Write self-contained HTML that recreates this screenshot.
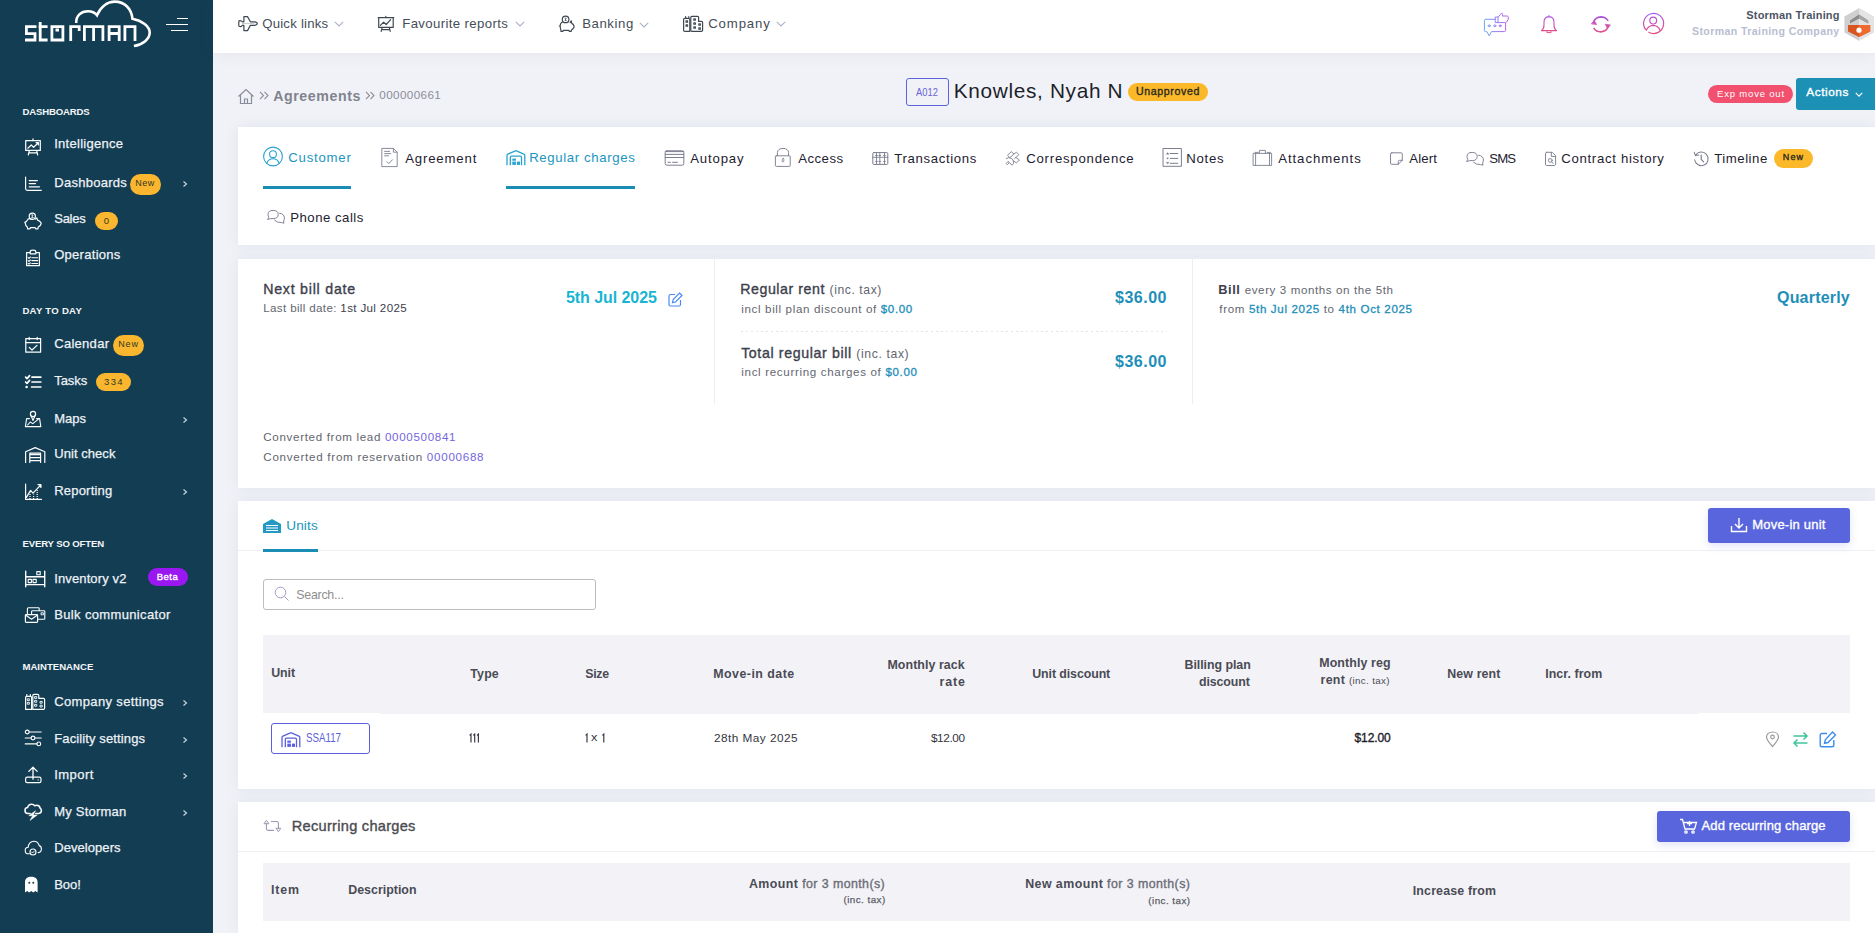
<!DOCTYPE html><html><head><meta charset="utf-8"><style>
*{box-sizing:border-box;margin:0;padding:0}
html,body{width:1875px;height:933px;overflow:hidden;background:#f1f2f7;font-family:'Liberation Sans', sans-serif}
.t{position:absolute;white-space:nowrap;line-height:1}
</style></head><body>
<div style="position:absolute;left:0px;top:0px;width:213px;height:933px;background:#133d53"></div>
<svg style="position:absolute;left:20px;top:0px;" width="135" height="50" viewBox="0 0 135 50" fill="none">
<g stroke="#fff" stroke-width="2.8" stroke-linecap="butt" stroke-linejoin="miter" fill="none" transform="translate(-20,0)">
<path d="M36.5,26.6 H26.4 V33.6 H35 V40 H25"/>
<path d="M40.2,22 V40 H47.6 M38.6,26.6 H47.6"/>
<path d="M51.9,26.6 H62.9 V40 H51.9 Z M55.5,30 H59"/>
<path d="M70.7,41 V26.6 H79.2 V31"/>
<path d="M84.4,41 V26.6 H102.9 V41 M93.6,26.6 V41"/>
<path d="M109.1,41 V26.6 H119.2 V41 M109.1,33.5 H119.2"/>
<path d="M124.9,41 V26.6 H135 V41"/>
<path stroke-width="2.6" d="M76.2,23 C76,15.5 81,11.3 88,11.3 C92,11.3 95,12.8 97,15.3 C101,6 108,1.6 114.7,1.6 C125,1.6 131.5,9 132.4,18.7 C142,20.5 149.7,26.5 149.7,32.6 C149.7,39 143,44.5 133.9,46"/>
</g></svg>
<div style="position:absolute;left:177px;top:18px;width:11px;height:1.3000000000000007px;background:#fff"></div>
<div style="position:absolute;left:166px;top:24px;width:22px;height:1.3000000000000007px;background:#fff"></div>
<div style="position:absolute;left:171px;top:30px;width:17px;height:1.3000000000000007px;background:#fff"></div>
<div id="t0" class="t" style="left:21.92px;top:107.04px;font-size:9.60px;font-weight:700;color:#f4f6f8;letter-spacing:-0.167px;margin-left:0.50px">DASHBOARDS</div>
<div id="t1" class="t" style="left:21.92px;top:306.34px;font-size:9.60px;font-weight:700;color:#f4f6f8;letter-spacing:0.261px;margin-left:0.50px">DAY TO DAY</div>
<div id="t2" class="t" style="left:21.92px;top:538.84px;font-size:9.60px;font-weight:700;color:#f4f6f8;letter-spacing:-0.154px;margin-left:0.50px">EVERY SO OFTEN</div>
<div id="t3" class="t" style="left:21.92px;top:662.24px;font-size:9.60px;font-weight:700;color:#f4f6f8;letter-spacing:0.000px;margin-left:0.50px">MAINTENANCE</div>
<div id="t4" class="t" style="left:53.72px;top:136.95px;font-size:13.00px;font-weight:400;color:#eef2f6;letter-spacing:0.273px;margin-left:0.50px;-webkit-text-stroke:0.25px #eef2f6">Intelligence</div>
<div id="t5" class="t" style="left:53.72px;top:175.75px;font-size:13.00px;font-weight:400;color:#eef2f6;letter-spacing:0.278px;margin-left:0.50px;-webkit-text-stroke:0.25px #eef2f6">Dashboards</div>
<svg style="position:absolute;left:181px;top:179.8px;" width="8" height="8" viewBox="0 0 8 8" fill="none"><path d="M2.5,1.5 L5.5,4 L2.5,6.5" stroke="#c9d3db" stroke-width="1.2"/></svg>
<div style="position:absolute;left:130px;top:174.0px;width:31px;height:21.0px;background:#fbb630;border-radius:10.5px"></div>
<div id="t6" class="t" style="left:145.50px;transform:translateX(-50%);top:179.01px;font-size:9.00px;font-weight:400;color:#2f3a22;letter-spacing:0.500px;margin-left:-0.50px">New</div>
<div id="t7" class="t" style="left:53.72px;top:212.45px;font-size:13.00px;font-weight:400;color:#eef2f6;letter-spacing:-0.250px;margin-left:0.50px;-webkit-text-stroke:0.25px #eef2f6">Sales</div>
<div style="position:absolute;left:95px;top:211.9px;width:23px;height:18.0px;background:#fbb630;border-radius:9.0px"></div>
<div id="t8" class="t" style="left:106.50px;transform:translateX(-50%);top:215.77px;font-size:9.50px;font-weight:400;color:#2f3a22;">0</div>
<div id="t9" class="t" style="left:53.72px;top:247.95px;font-size:13.00px;font-weight:400;color:#eef2f6;letter-spacing:0.278px;margin-left:0.50px;-webkit-text-stroke:0.25px #eef2f6">Operations</div>
<div id="t10" class="t" style="left:53.72px;top:337.35px;font-size:13.00px;font-weight:400;color:#eef2f6;letter-spacing:0.286px;margin-left:0.50px;-webkit-text-stroke:0.25px #eef2f6">Calendar</div>
<div style="position:absolute;left:113.2px;top:334.95px;width:30.89999999999999px;height:21.0px;background:#fbb630;border-radius:10.5px"></div>
<div id="t11" class="t" style="left:128.65px;transform:translateX(-50%);top:340.32px;font-size:9.00px;font-weight:400;color:#2f3a22;letter-spacing:0.900px;margin-left:-0.15px">New</div>
<div id="t12" class="t" style="left:53.72px;top:374.45px;font-size:13.00px;font-weight:400;color:#eef2f6;letter-spacing:-0.075px;margin-left:0.50px;-webkit-text-stroke:0.25px #eef2f6">Tasks</div>
<div style="position:absolute;left:95.9px;top:373.0px;width:35.099999999999994px;height:18.0px;background:#fbb630;border-radius:9.0px"></div>
<div id="t13" class="t" style="left:113.45px;transform:translateX(-50%);top:376.78px;font-size:9.50px;font-weight:400;color:#2f3a22;letter-spacing:1.300px;margin-left:0.55px">334</div>
<div id="t14" class="t" style="left:53.72px;top:411.55px;font-size:13.00px;font-weight:400;color:#eef2f6;letter-spacing:-0.000px;margin-left:0.50px;-webkit-text-stroke:0.25px #eef2f6">Maps</div>
<svg style="position:absolute;left:181px;top:415.6px;" width="8" height="8" viewBox="0 0 8 8" fill="none"><path d="M2.5,1.5 L5.5,4 L2.5,6.5" stroke="#c9d3db" stroke-width="1.2"/></svg>
<div id="t15" class="t" style="left:53.72px;top:446.95px;font-size:13.00px;font-weight:400;color:#eef2f6;letter-spacing:0.056px;margin-left:0.50px;-webkit-text-stroke:0.25px #eef2f6">Unit check</div>
<div id="t16" class="t" style="left:53.72px;top:483.95px;font-size:13.00px;font-weight:400;color:#eef2f6;letter-spacing:0.203px;margin-left:0.50px;-webkit-text-stroke:0.25px #eef2f6">Reporting</div>
<svg style="position:absolute;left:181px;top:488px;" width="8" height="8" viewBox="0 0 8 8" fill="none"><path d="M2.5,1.5 L5.5,4 L2.5,6.5" stroke="#c9d3db" stroke-width="1.2"/></svg>
<div id="t17" class="t" style="left:53.72px;top:571.95px;font-size:13.00px;font-weight:400;color:#eef2f6;letter-spacing:0.123px;margin-left:0.50px;-webkit-text-stroke:0.25px #eef2f6">Inventory v2</div>
<div style="position:absolute;left:148px;top:568.0px;width:40px;height:18.0px;background:#9a17f2;border-radius:9.0px"></div>
<div id="t18" class="t" style="left:168.00px;transform:translateX(-50%);top:571.77px;font-size:9.50px;font-weight:500;color:#ffffff;letter-spacing:0.530px;margin-left:-0.50px;-webkit-text-stroke:0.35px #ffffff">Beta</div>
<div id="t19" class="t" style="left:53.72px;top:607.55px;font-size:13.00px;font-weight:400;color:#eef2f6;letter-spacing:0.355px;margin-left:0.50px;-webkit-text-stroke:0.25px #eef2f6">Bulk communicator</div>
<div id="t20" class="t" style="left:53.72px;top:694.95px;font-size:13.00px;font-weight:400;color:#eef2f6;letter-spacing:0.355px;margin-left:0.50px;-webkit-text-stroke:0.25px #eef2f6">Company settings</div>
<svg style="position:absolute;left:181px;top:699px;" width="8" height="8" viewBox="0 0 8 8" fill="none"><path d="M2.5,1.5 L5.5,4 L2.5,6.5" stroke="#c9d3db" stroke-width="1.2"/></svg>
<div id="t21" class="t" style="left:53.72px;top:731.85px;font-size:13.00px;font-weight:400;color:#eef2f6;letter-spacing:0.120px;margin-left:0.50px;-webkit-text-stroke:0.25px #eef2f6">Facility settings</div>
<svg style="position:absolute;left:181px;top:735.9px;" width="8" height="8" viewBox="0 0 8 8" fill="none"><path d="M2.5,1.5 L5.5,4 L2.5,6.5" stroke="#c9d3db" stroke-width="1.2"/></svg>
<div id="t22" class="t" style="left:53.72px;top:767.55px;font-size:13.00px;font-weight:400;color:#eef2f6;letter-spacing:0.460px;margin-left:0.50px;-webkit-text-stroke:0.25px #eef2f6">Import</div>
<svg style="position:absolute;left:181px;top:771.6px;" width="8" height="8" viewBox="0 0 8 8" fill="none"><path d="M2.5,1.5 L5.5,4 L2.5,6.5" stroke="#c9d3db" stroke-width="1.2"/></svg>
<div id="t23" class="t" style="left:53.72px;top:804.65px;font-size:13.00px;font-weight:400;color:#eef2f6;letter-spacing:0.209px;margin-left:0.50px;-webkit-text-stroke:0.25px #eef2f6">My Storman</div>
<svg style="position:absolute;left:181px;top:808.7px;" width="8" height="8" viewBox="0 0 8 8" fill="none"><path d="M2.5,1.5 L5.5,4 L2.5,6.5" stroke="#c9d3db" stroke-width="1.2"/></svg>
<div id="t24" class="t" style="left:53.72px;top:841.45px;font-size:13.00px;font-weight:400;color:#eef2f6;letter-spacing:0.061px;margin-left:0.50px;-webkit-text-stroke:0.25px #eef2f6">Developers</div>
<div id="t25" class="t" style="left:53.72px;top:877.55px;font-size:13.00px;font-weight:400;color:#eef2f6;letter-spacing:-0.036px;margin-left:0.50px;-webkit-text-stroke:0.25px #eef2f6">Boo!</div>
<svg style="position:absolute;left:23px;top:137px" width="21" height="20" viewBox="23 137 21 20" fill="none" stroke="#fff" stroke-width="1.2" stroke-linecap="round" stroke-linejoin="round"><rect x="25.7" y="140.6" width="14.6" height="9.8"/><path d="M33,138.8 V140.6 M27.8,148.2 L31.3,145 L33.6,147.3 L38.3,142.7 M36,142.6 H38.4 V145 M29.2,151 L28.3,155 M36.8,151 L37.7,155 M28.8,152.9 H37.2"/></svg>
<svg style="position:absolute;left:23px;top:175px" width="21" height="18" viewBox="23 175 21 18" fill="none" stroke="#fff" stroke-width="1.2" stroke-linecap="round" stroke-linejoin="round"><path d="M25.6,177 V188.5 Q25.6,190.3 27.4,190.3 H41.3 M29.2,180.6 H37.4 M29.2,183.6 H35.5 M29.2,186.8 H39.5"/></svg>
<svg style="position:absolute;left:23px;top:211px" width="21" height="20" viewBox="23 211 21 20" fill="none" stroke="#fff" stroke-width="1.2" stroke-linecap="round" stroke-linejoin="round"><circle cx="32.3" cy="216.3" r="3.1"/><path d="M31.6,215 H33 L31.7,217.6 H33.2" stroke-width="0.9"/><path d="M27,220.5 C28,218.8 30,218.6 31,219 M35.4,219 L36.8,218 L37.6,220.2 C39,220.6 40.5,221.7 41.2,223 C41,225 39.5,226.5 38.2,227 L38,228.8 H35.6 L35.2,227.6 H30.5 L30,228.8 H27.6 L27.3,226.9 C26,226 25.4,224.8 25.4,223.4 L24.8,222.3 L26.3,221.6 C26.8,221 27,220.7 27,220.5"/></svg>
<svg style="position:absolute;left:23px;top:248px" width="21" height="20" viewBox="23 248 21 20" fill="none" stroke="#fff" stroke-width="1.2" stroke-linecap="round" stroke-linejoin="round"><path d="M30.2,252.6 H26.6 V265.6 H39.4 V252.6 H35.8 M30.2,253.8 V252 C30.2,250.8 31.4,250.2 33,250.2 C34.6,250.2 35.8,250.8 35.8,252 V253.8 Z"/><path d="M28.2,257.6 L29,258.4 L30.4,257 M28.2,260.6 L29,261.4 L30.4,260 M28.2,263.4 L29,264.2 L30.4,262.8 M31.8,257.7 H37.6 M31.8,260.6 H37.6 M31.8,263.5 H37.6" stroke-width="1.1"/></svg>
<svg style="position:absolute;left:23px;top:335px" width="21" height="20" viewBox="23 335 21 20" fill="none" stroke="#fff" stroke-width="1.2" stroke-linecap="round" stroke-linejoin="round"><rect x="25.8" y="338.6" width="14.8" height="13.6"/><path d="M25.8,342.6 H40.6 M29.2,337.4 V339.6 M37.2,337.4 V339.6 M29.2,347.4 L32,350 L37,345.4"/></svg>
<svg style="position:absolute;left:23px;top:373px" width="21" height="18" viewBox="23 373 21 18" fill="none" stroke="#fff" stroke-width="1.2" stroke-linecap="round" stroke-linejoin="round"><path d="M25.6,377.2 L27,378.6 L29.6,375.6 M25.6,382 L27,383.4 L29.6,380.4 M32,377.2 H40.8 M32,382 H40.8 M31.6,387 H40.8" stroke-width="1.7"/><circle cx="26.6" cy="387" r="1.3" fill="#fff" stroke="none"/></svg>
<svg style="position:absolute;left:23px;top:409px" width="21" height="20" viewBox="23 409 21 20" fill="none" stroke="#fff" stroke-width="1.2" stroke-linecap="round" stroke-linejoin="round"><circle cx="33" cy="414" r="2.6"/><path d="M31.2,416 L33,420.5 L34.8,416 M29.4,418.6 H26.6 L25.4,426.6 H40.8 L39.6,418.6 H36.6 M27.6,425 L30.2,422 L32.8,423.6 L38.2,419.4" stroke-width="1.1"/></svg>
<svg style="position:absolute;left:23px;top:445px" width="24" height="20" viewBox="23 445 24 20" fill="none" stroke="#fff" stroke-width="1.2" stroke-linecap="round" stroke-linejoin="round"><path d="M25.6,462.4 V451.8 L35.2,447.6 L44.8,451.8 V462.4 M29.8,462.4 V453.2 H40.6 V462.4 M29.8,454.6 H40.6 M29.8,457.6 H40.6 M29.8,460.6 H40.6"/></svg>
<svg style="position:absolute;left:23px;top:482px" width="21" height="20" viewBox="23 482 21 20" fill="none" stroke="#fff" stroke-width="1.2" stroke-linecap="round" stroke-linejoin="round"><path d="M25.6,484 V499.4 H41.4 M26.4,497.4 L30.6,490.4 L33,493.2 L40.8,484.8 M38,484.6 H40.9 V487.4"/><path d="M30,499 V492.6 M33.6,499 V494.6 M37.2,499 V489.8" stroke-dasharray="1 1" stroke-linecap="butt"/></svg>
<svg style="position:absolute;left:23px;top:569px" width="24" height="20" viewBox="23 569 24 20" fill="none" stroke="#fff" stroke-width="1.2" stroke-linecap="round" stroke-linejoin="round"><path d="M25.7,571.2 V586.8 M44.7,571.2 V586.8 M25.7,576.8 H44.7 M25.7,584.6 H44.7" stroke-width="1.4"/><rect x="36.8" y="571.6" width="3.4" height="3.2" stroke-width="1.1"/><rect x="28.2" y="579.4" width="3.2" height="3.2" stroke-width="1.1"/><rect x="33" y="579.4" width="3.2" height="3.2" stroke-width="1.1"/></svg>
<svg style="position:absolute;left:23px;top:605px" width="24" height="20" viewBox="23 605 24 20" fill="none" stroke="#fff" stroke-width="1.2" stroke-linecap="round" stroke-linejoin="round"><path d="M27.4,613.8 V608.8 Q27.4,607.8 28.4,607.8 H38.4 Q39.2,607.8 39.2,608.6 V610.4" stroke-width="1.1"/><path d="M38,619.2 H44 Q44.8,619.2 44.8,618.4 V611.6 Q44.8,610.8 44,610.8 H32.4 Q31.6,610.8 31.6,611.6 V614" stroke-width="1.1"/><rect x="41.4" y="612.8" width="2" height="2" stroke-width="0.9"/><rect x="25.4" y="614.6" width="12.2" height="7.8" rx="0.8" stroke-width="1.2"/><path d="M25.8,615.2 L31.5,619.2 L37.2,615.2" stroke-width="1.1"/></svg>
<svg style="position:absolute;left:23px;top:692px" width="24" height="20" viewBox="23 692 24 20" fill="none" stroke="#fff" stroke-width="1.2" stroke-linecap="round" stroke-linejoin="round"><path d="M25.6,709.4 V697.6 Q25.6,696.4 26.8,696.4 H30.4 Q31.6,696.4 31.6,697.6 V709.4 Z M26.8,696.4 V694.6 M30.4,696.4 V694.6" stroke-width="1.2"/><path d="M32.8,709.4 V695.6 Q32.8,694.4 34,694.4 H37.6 Q38.8,694.4 38.8,695.6 V698.4 H43.4 Q44.6,698.4 44.6,699.6 V708.2 Q44.6,709.4 43.4,709.4 Z" stroke-width="1.2"/><rect x="27.6" y="698.8" width="1.8" height="1.8" stroke-width="0.9"/><rect x="27.6" y="702.4" width="1.8" height="1.8" stroke-width="0.9"/><rect x="35" y="696.6" width="1.8" height="1.8" stroke-width="0.9"/><rect x="35" y="700.4" width="1.8" height="1.8" stroke-width="0.9"/><rect x="35" y="704.4" width="1.8" height="1.8" stroke-width="0.9"/><rect x="40.4" y="701.4" width="1.8" height="1.8" stroke-width="0.9"/><rect x="40.4" y="705.2" width="1.8" height="1.8" stroke-width="0.9"/></svg>
<svg style="position:absolute;left:23px;top:728px" width="21" height="20" viewBox="23 728 21 20" fill="none" stroke="#fff" stroke-width="1.2" stroke-linecap="round" stroke-linejoin="round"><path d="M29.2,732 H41.2 M25.2,738 H31.2 M34.8,738 H41.2 M25.2,743.9 H37 M25.2,732 H25.4" stroke-width="1.1"/><circle cx="27.3" cy="732" r="1.9" stroke-width="1.1"/><circle cx="33" cy="738" r="1.9" stroke-width="1.1"/><circle cx="38.8" cy="743.9" r="1.9" stroke-width="1.1"/></svg>
<svg style="position:absolute;left:23px;top:765px" width="21" height="20" viewBox="23 765 21 20" fill="none" stroke="#fff" stroke-width="1.2" stroke-linecap="round" stroke-linejoin="round"><path d="M33,779.2 V767.4 M28.8,771.4 L33,767.2 L37.2,771.4" stroke-width="1.3"/><rect x="25.6" y="777.2" width="15.4" height="5.4" rx="1.6" stroke-width="1.2"/><circle cx="38.2" cy="779.9" r="0.7" fill="#fff" stroke="none"/></svg>
<svg style="position:absolute;left:23px;top:802px" width="21" height="20" viewBox="23 802 21 20" fill="none" stroke="#fff" stroke-width="1.2" stroke-linecap="round" stroke-linejoin="round"><path d="M30.2,813.4 H27.8 C26,813.4 25,812 25,810.4 C25,808.8 26.2,807.6 27.6,807.6 C28,805.6 29.6,804.2 31.6,804.2 C33,804.2 34.2,804.8 34.8,805.8 C35.4,805.4 36,805.2 36.8,805.2 C38.6,805.2 40,806.6 40.2,808.4 C41,808.8 41.4,809.6 41.4,810.6 C41.4,812.2 40.2,813.4 38.6,813.4 H35.8" stroke-width="1.5"/><path d="M35.4,810.8 L28.8,815.7 H32.6 L30,820.4 L37.2,815.1 H33.4 Z" fill="#fff" stroke-width="0.5"/></svg>
<svg style="position:absolute;left:23px;top:839px" width="21" height="20" viewBox="23 839 21 20" fill="none" stroke="#fff" stroke-width="1.2" stroke-linecap="round" stroke-linejoin="round"><path d="M29.4,853.8 H28.4 C26.4,853.8 25.2,852.2 25.2,850.4 C25.2,848.6 26.6,847.2 28.2,847.2 C28.4,843.8 30.8,841.2 33.6,841.2 C36.4,841.2 38.6,843 39.2,845.6 C40.6,846 41.4,847.4 41.4,849 C41.4,851 40,852.4 38.2,852.6" stroke-width="1.1"/><circle cx="33" cy="852" r="3" stroke-width="1.1"/><path d="M31.6,852 L32.6,853 L34.4,851" stroke-width="0.9"/></svg>
<svg style="position:absolute;left:23.8px;top:876px;" width="15" height="17" viewBox="0 0 15 17" fill="none"><path d="M1,16.4 V6.6 C1,2.4 3.6,0.8 7.2,0.8 C10.8,0.8 13.6,2.4 13.6,6.6 V16.4 L11.4,14.9 L9.3,16.4 L7.2,14.9 L5.2,16.4 L3.1,14.9 Z" fill="#fff"/><circle cx="5.3" cy="6.8" r="1" fill="#133d53"/><circle cx="9.3" cy="6.8" r="1" fill="#133d53"/></svg>
<div style="position:absolute;left:213px;top:0px;width:1662px;height:53px;background:#fff;box-shadow:0 0 16px 0 rgba(70,80,120,0.08)"></div>
<div id="t26" class="t" style="left:262.01px;top:16.98px;font-size:13.20px;font-weight:400;color:#444d57;letter-spacing:0.220px;margin-left:0.20px">Quick links</div>
<div id="t27" class="t" style="left:402.21px;top:16.98px;font-size:13.20px;font-weight:400;color:#444d57;letter-spacing:0.375px;margin-left:0.00px">Favourite reports</div>
<svg style="position:absolute;left:333.5px;top:21px;" width="10" height="6" viewBox="0 0 10 6" fill="none"><path d="M0.8,0.8 L5,5 L9.2,0.8" stroke="#aab2c8" stroke-width="1.1"/></svg>
<svg style="position:absolute;left:514.5px;top:21px;" width="10" height="6" viewBox="0 0 10 6" fill="none"><path d="M0.8,0.8 L5,5 L9.2,0.8" stroke="#aab2c8" stroke-width="1.1"/></svg>
<div id="t28" class="t" style="left:582.61px;top:16.98px;font-size:13.20px;font-weight:400;color:#444d57;letter-spacing:0.563px;margin-left:-0.40px">Banking</div>
<svg style="position:absolute;left:639px;top:21.5px;" width="10" height="6" viewBox="0 0 10 6" fill="none"><path d="M0.8,0.8 L5,5 L9.2,0.8" stroke="#aab2c8" stroke-width="1.1"/></svg>
<div id="t29" class="t" style="left:707.41px;top:16.98px;font-size:13.20px;font-weight:400;color:#444d57;letter-spacing:0.871px;margin-left:0.80px">Company</div>
<svg style="position:absolute;left:776px;top:21px;" width="10" height="6" viewBox="0 0 10 6" fill="none"><path d="M0.8,0.8 L5,5 L9.2,0.8" stroke="#aab2c8" stroke-width="1.1"/></svg>
<div style="position:absolute;left:238px;top:127px;width:1637px;height:118px;background:#fff;box-shadow:0 0 14px 0 rgba(60,85,150,0.09)"></div>
<div style="position:absolute;left:238px;top:259px;width:1637px;height:229px;background:#fff;box-shadow:0 0 14px 0 rgba(60,85,150,0.09)"></div>
<div style="position:absolute;left:238px;top:501px;width:1637px;height:288px;background:#fff;box-shadow:0 0 14px 0 rgba(60,85,150,0.09)"></div>
<div style="position:absolute;left:238px;top:802px;width:1637px;height:131px;background:#fff;box-shadow:0 0 14px 0 rgba(60,85,150,0.09)"></div>
<svg style="position:absolute;left:235px;top:13px" width="25" height="21" viewBox="235 13 25 21" fill="none" stroke="#3f4852" stroke-width="1.2" stroke-linecap="round" stroke-linejoin="round"><path d="M238.8,21.4 Q238.8,20.6 240.2,20.6 Q241.6,20.6 242.2,21.8 H243.9 V16.6 H247.5 L250.4,21.8 H254.6 Q257.3,22.3 257.3,23.6 Q257.3,24.9 254.6,25.4 H250.4 L247.5,30.6 H243.9 V25.4 H242.2 Q241.6,26.6 240.2,26.6 Q238.8,26.6 238.8,25.8 Z"/><path d="M242.4,23.6 H254" stroke-width="0.6" stroke="#9aa0a8"/></svg>
<svg style="position:absolute;left:375px;top:14px" width="22" height="20" viewBox="375 14 22 20" fill="none" stroke="#3f4852" stroke-width="1.2" stroke-linecap="round" stroke-linejoin="round"><path d="M378.2,17.6 H393.8 M378.7,17.6 V27.4 H393.2 V17.6 M380.4,25.4 L383.6,22.2 L386.2,24.5 L390.6,19.6 M385.8,17.4 V16.4 M382,27.8 L381.2,31.4 M389.4,27.8 L390.2,31.4 M382,29.6 H389.4"/></svg>
<svg style="position:absolute;left:556px;top:14px" width="22" height="20" viewBox="556 14 22 20" fill="none" stroke="#3f4852" stroke-width="1.2" stroke-linecap="round" stroke-linejoin="round"><circle cx="565.6" cy="19.4" r="3.3"/><path d="M565.1,18.2 H566.2 L565,20.6 H566.3" stroke-width="0.8"/><path d="M561.4,22.6 C560.6,23.4 560.2,24.6 560.2,25.8 L559.2,26 M562.2,22.2 C562.4,22 562.6,22 562.8,22 M570.2,22.6 L571.2,20.8 L571.8,23.4 C573,24 573.8,25 574,26.2 L574,27.2 C573.4,28.6 572.4,29.4 571.6,29.8 L571.2,31.4 H569.4 L568.8,30.4 H563.4 L562.8,31.4 H561 L560.8,29.6 C560.4,28.8 560.2,27.6 560.2,25.8"/></svg>
<svg style="position:absolute;left:681px;top:14px" width="24" height="20" viewBox="681 14 24 20" fill="none" stroke="#3f4852" stroke-width="1.2" stroke-linecap="round" stroke-linejoin="round"><path d="M684.8,18.4 H688.6 Q689.8,18.4 689.8,19.6 V31.4 H684.8 Q683.6,31.4 683.6,30.2 V19.6 Q683.6,18.4 684.8,18.4 Z M685.6,18.4 V16.6 M688.8,18.4 V16.6"/><path d="M692,16.4 H697.6 Q698.6,16.4 698.6,17.6 V21.4 H701.4 Q702.6,21.4 702.6,22.6 V30.2 Q702.6,31.4 701.4,31.4 H692 Q690.8,31.4 690.8,30.2 V17.6 Q690.8,16.4 692,16.4 Z"/><g stroke-width="1.1"><rect x="686" y="20.9" width="1.6" height="1.4"/><rect x="686" y="24.9" width="1.6" height="1.4"/><rect x="693.8" y="18.9" width="1.6" height="1.4"/><rect x="693.8" y="22.9" width="1.6" height="1.4"/><rect x="693.8" y="26.9" width="1.6" height="1.4"/><rect x="698.8" y="23.9" width="1.6" height="1.4"/><rect x="698.8" y="27.9" width="1.6" height="1.4"/></g></svg>
<svg width="0" height="0" style="position:absolute"><defs>
<linearGradient id="gv" gradientUnits="userSpaceOnUse" x1="0" y1="13" x2="0" y2="34"><stop offset="0" stop-color="#a259f2"/><stop offset="1" stop-color="#ec4c7c"/></linearGradient>
<linearGradient id="gh" gradientUnits="userSpaceOnUse" x1="1484" y1="0" x2="1508" y2="0"><stop offset="0" stop-color="#62a8f6"/><stop offset="1" stop-color="#c15cf0"/></linearGradient>
</defs></svg>
<svg style="position:absolute;left:1482px;top:10px" width="30" height="28" viewBox="1482 10 30 28" fill="none" stroke="url(#gh)" stroke-width="1" stroke-linecap="round" stroke-linejoin="round"><path d="M1485.6,19.3 H1495.4 M1505.6,23 V30.4 Q1505.6,31.6 1504.4,31.6 H1491.6 L1489.2,35.8 L1486.8,31.6 H1485.6 Q1484.4,31.6 1484.4,30.4 V20.5 Q1484.4,19.3 1485.6,19.3"/><ellipse cx="1489.2" cy="25.8" rx="1.1" ry="0.9"/><ellipse cx="1494.8" cy="25.8" rx="1.1" ry="0.9"/><ellipse cx="1500.2" cy="25.8" rx="1.1" ry="0.9"/><path d="M1495.6,17 H1498 V22.6 H1495.6 Z M1498,17.2 L1500.6,14.4 Q1501,12.8 1502.2,13.4 Q1503,14 1502.4,16 H1507.2 Q1508.8,16.4 1508.2,18 Q1509,19.2 1507.6,20 Q1507.8,21.6 1506.4,22 Q1505.8,22.8 1504.8,22.6 H1498" fill="#fff"/></svg>
<svg style="position:absolute;left:1538px;top:13px" width="22" height="23" viewBox="1538 13 22 23" fill="none" stroke="url(#gv)" stroke-width="1.1" stroke-linecap="round" stroke-linejoin="round"><path d="M1549,15.6 V16.6 M1541.4,30.6 Q1544,29 1544,25.2 V22.2 Q1544,16.8 1549,16.6 Q1554,16.8 1554,22.2 V25.2 Q1554,29 1556.6,30.6 Z M1546.8,32 Q1549,33.4 1551.2,32"/></svg>
<svg style="position:absolute;left:1590px;top:14px" width="22" height="21" viewBox="1590 14 22 21" fill="none" stroke="url(#gv)" stroke-width="1.6" stroke-linecap="round" stroke-linejoin="round"><path d="M1593.6,22 Q1595.2,17.4 1600.9,16.9 Q1605.4,16.9 1607.8,20.4 M1608.2,26.8 Q1606.6,31.4 1600.9,31.9 Q1596.4,31.9 1594,28.4" stroke-width="1.6"/><path d="M1591.6,23.6 L1594.2,20.6 L1596.4,24.2 Z M1610.2,25.2 L1607.6,28.2 L1605.4,24.6 Z" fill="url(#gv)" stroke-width="0.8"/></svg>
<svg style="position:absolute;left:1640px;top:11px" width="27" height="25" viewBox="1640 11 27 25" fill="none" stroke="url(#gv)" stroke-width="1.2" stroke-linecap="round" stroke-linejoin="round"><path d="M1645.6,29.4 A10,10 0 1 1 1648.8,32.2" /><circle cx="1653.2" cy="20.6" r="3.4"/><path d="M1646.4,30.2 Q1648.2,25.6 1653.2,25.4 Q1658.2,25.6 1660,30.2"/></svg>
<div id="t30" class="t" style="right:35.04px;top:9.85px;font-size:11.00px;font-weight:700;color:#4d5464;letter-spacing:0.180px;margin-right:0.30px">Storman Training</div>
<div id="t31" class="t" style="right:34.76px;top:25.79px;font-size:10.60px;font-weight:700;color:#b8bed1;letter-spacing:0.392px;margin-right:0.60px">Storman Training Company</div>
<svg style="position:absolute;left:1842px;top:7px" width="33" height="35" viewBox="1842 7 33 35"><path d="M1859,8.3 L1873.6,16.4 V32.6 L1859,40.8 L1844.4,32.6 V16.4 Z" fill="#cfcfcf"/><path d="M1859,8.3 L1873.6,16.4 V32.6 L1859,40.8 Z" fill="#e4e4e4"/><path d="M1850,20.6 L1859,14.6 L1868.2,20.6 V23.4 L1859,18.6 L1850,23.4 Z" fill="#8a8a8a"/><path d="M1859,14.6 L1868.2,20.6 V23.4 L1859,18.6 Z" fill="#a6a6a6"/><path d="M1848,25 H1870.2 V31.4 L1859,37 L1848,31.4 Z" fill="#d9551f"/><path d="M1859,25 H1870.2 V31.4 L1859,37 Z" fill="#ee6a2e"/><circle cx="1859" cy="30.2" r="2.6" fill="#fff"/></svg>
<svg style="position:absolute;left:237px;top:88px;" width="18" height="17" viewBox="0 0 18 17" fill="none"><path d="M1.5,8.5 L9,1.5 L16.5,8.5 M3.5,7 V15.5 H14.5 V7 M7.5,15.5 V11 H10.5 V15.5" stroke="#8a8d99" stroke-width="1.2" fill="none"/></svg>
<svg style="position:absolute;left:259px;top:91px;" width="10" height="9" viewBox="0 0 10 9" fill="none"><path d="M1,0.8 L4.5,4.5 L1,8.2 M5.5,0.8 L9,4.5 L5.5,8.2" stroke="#8a8d99" stroke-width="1.1" fill="none"/></svg>
<div id="t32" class="t" style="left:272.35px;top:89.03px;font-size:14.20px;font-weight:700;color:#80838e;letter-spacing:0.581px;margin-left:0.80px">Agreements</div>
<svg style="position:absolute;left:365px;top:91px;" width="10" height="9" viewBox="0 0 10 9" fill="none"><path d="M1,0.8 L4.5,4.5 L1,8.2 M5.5,0.8 L9,4.5 L5.5,8.2" stroke="#8a8d99" stroke-width="1.1" fill="none"/></svg>
<div id="t33" class="t" style="left:378.30px;top:89.46px;font-size:11.70px;font-weight:400;color:#8a8d99;letter-spacing:0.375px;margin-left:1.00px">000000661</div>
<div style="position:absolute;left:906px;top:78px;width:43px;height:28px;border:1.3px solid #5d63e0;border-radius:3px"></div>
<div id="t34" class="t" style="left:915.75px;top:87.22px;font-size:10.80px;font-weight:400;color:#6a63d8;transform:scaleX(0.8674);transform-origin:left;margin-left:0.40px">A012</div>
<div id="t35" class="t" style="left:953.55px;top:80.52px;font-size:20.80px;font-weight:400;color:#1c1f2b;letter-spacing:0.668px;margin-left:0.20px">Knowles, Nyah N</div>
<div style="position:absolute;left:1128px;top:82.9px;width:80px;height:18.19999999999999px;background:#fbb829;border-radius:9.1px"></div>
<div id="t36" class="t" style="left:1168.00px;transform:translateX(-50%);top:86.49px;font-size:10.60px;font-weight:500;color:#2a2a22;letter-spacing:0.611px;margin-left:0.00px;-webkit-text-stroke:0.35px #2a2a22">Unapproved</div>
<div style="position:absolute;left:1708px;top:85.0px;width:85px;height:17.80000000000001px;background:#f1516f;border-radius:8.9px"></div>
<div id="t37" class="t" style="left:1750.50px;transform:translateX(-50%);top:88.67px;font-size:9.50px;font-weight:400;color:#ffffff;letter-spacing:0.807px;margin-left:0.50px">Exp move out</div>
<div style="position:absolute;left:1796px;top:78px;width:79px;height:32px;background:#1c90b5;border-radius:3px 0 0 3px"></div>
<div id="t38" class="t" style="left:1805.69px;top:86.77px;font-size:11.80px;font-weight:500;color:#ffffff;letter-spacing:0.563px;margin-left:0.60px;-webkit-text-stroke:0.35px #ffffff">Actions</div>
<svg style="position:absolute;left:1855px;top:92px;" width="8" height="6" viewBox="0 0 8 6" fill="none"><path d="M0.8,0.8 L4,4.2 L7.2,0.8" stroke="#fff" stroke-width="1.1" fill="none"/></svg>
<div id="t39" class="t" style="left:287.71px;top:150.98px;font-size:13.20px;font-weight:400;color:#2095c0;letter-spacing:0.786px;margin-left:0.50px">Customer</div>
<div style="position:absolute;left:263px;top:186px;width:88px;height:3px;background:#1a8db5"></div>
<div id="t40" class="t" style="left:404.61px;top:152.08px;font-size:13.20px;font-weight:400;color:#1e2130;letter-spacing:0.825px;margin-left:0.60px">Agreement</div>
<div id="t41" class="t" style="left:529.11px;top:151.48px;font-size:13.20px;font-weight:400;color:#2095c0;letter-spacing:0.634px;margin-left:0.10px">Regular charges</div>
<svg style="position:absolute;left:505.6px;top:150.2px;" width="20" height="16" viewBox="0 0 20 16" fill="none"><g stroke="#2aa3d0" stroke-width="1.3" fill="none" stroke-linejoin="round"><path d="M1,15.2 V5.4 Q1,4.5 1.9,4.1 L9.4,0.9 Q9.9,0.7 10.4,0.9 L17.9,4.1 Q18.8,4.5 18.8,5.4 V15.2"/><path d="M4.3,15.2 V7.4 Q4.3,6.2 5.5,6.2 H14.3 Q15.5,6.2 15.5,7.4 V15.2"/></g><g fill="#2aa3d0"><rect x="6.3" y="8.6" width="3.6" height="2.1"/><rect x="6.3" y="11.6" width="3.6" height="3.3"/><rect x="10.9" y="11.6" width="3.1" height="3.3"/></g></svg>
<div style="position:absolute;left:506px;top:186px;width:129px;height:3px;background:#1a8db5"></div>
<div id="t42" class="t" style="left:689.21px;top:152.08px;font-size:13.20px;font-weight:400;color:#1e2130;letter-spacing:0.833px;margin-left:1.00px">Autopay</div>
<div id="t43" class="t" style="left:797.51px;top:152.08px;font-size:13.20px;font-weight:400;color:#1e2130;letter-spacing:0.480px;margin-left:0.70px">Access</div>
<div id="t44" class="t" style="left:893.71px;top:152.08px;font-size:13.20px;font-weight:400;color:#1e2130;letter-spacing:0.658px;margin-left:0.50px">Transactions</div>
<div id="t45" class="t" style="left:1025.41px;top:152.08px;font-size:13.20px;font-weight:400;color:#1e2130;letter-spacing:0.767px;margin-left:0.80px">Correspondence</div>
<div id="t46" class="t" style="left:1186.71px;top:152.08px;font-size:13.20px;font-weight:400;color:#1e2130;letter-spacing:0.725px;margin-left:-0.50px">Notes</div>
<div id="t47" class="t" style="left:1277.11px;top:152.08px;font-size:13.20px;font-weight:400;color:#1e2130;letter-spacing:0.930px;margin-left:1.10px">Attachments</div>
<div id="t48" class="t" style="left:1407.81px;top:152.08px;font-size:13.20px;font-weight:400;color:#1e2130;letter-spacing:0.150px;margin-left:1.40px">Alert</div>
<div id="t49" class="t" style="left:1489.51px;top:152.08px;font-size:13.20px;font-weight:400;color:#1e2130;letter-spacing:-0.850px;margin-left:-0.30px">SMS</div>
<div id="t50" class="t" style="left:1560.91px;top:152.08px;font-size:13.20px;font-weight:400;color:#1e2130;letter-spacing:0.691px;margin-left:0.30px">Contract history</div>
<div id="t51" class="t" style="left:1713.21px;top:152.08px;font-size:13.20px;font-weight:400;color:#1e2130;letter-spacing:0.530px;margin-left:1.00px">Timeline</div>
<div style="position:absolute;left:1773.9px;top:148.9px;width:39.19999999999982px;height:19.0px;background:#fbb829;border-radius:9.5px"></div>
<div id="t52" class="t" style="left:1793.50px;transform:translateX(-50%);top:153.18px;font-size:9.00px;font-weight:500;color:#2a2a22;letter-spacing:1.200px;margin-left:0.00px;-webkit-text-stroke:0.35px #2a2a22">New</div>
<div id="t53" class="t" style="left:290.41px;top:210.88px;font-size:13.20px;font-weight:400;color:#1e2130;letter-spacing:0.500px;margin-left:-0.20px">Phone calls</div>
<svg style="position:absolute;left:260px;top:144px" width="26" height="25" viewBox="260 144 26 25" fill="none" stroke="#2aa3d0" stroke-width="1.1" stroke-linecap="round" stroke-linejoin="round"><circle cx="273" cy="156.5" r="9.4"/><circle cx="273" cy="154.2" r="3.4"/><path d="M266.8,163.4 C267.8,160.4 270.2,158.8 273,158.8 C275.8,158.8 278.2,160.4 279.2,163.4"/></svg>
<svg style="position:absolute;left:379px;top:146px" width="21" height="23" viewBox="379 146 21 23" fill="none" stroke="#7c7e90" stroke-width="0.9" stroke-linecap="round" stroke-linejoin="round"><path d="M382.2,148.4 H393.4 L397.2,152.2 V166.6 H382.2 Z M393.4,148.4 V152.2 H397.2 M384.6,151.4 H389.6 M384.6,153.6 H390.8 M384.6,155.8 H388.6 M386.8,161.6 L388.8,163.6 L392.4,159.8"/></svg>
<svg style="position:absolute;left:662px;top:148px" width="25" height="20" viewBox="662 148 25 20" fill="none" stroke="#7c7e90" stroke-width="1" stroke-linecap="round" stroke-linejoin="round"><rect x="665.2" y="150.8" width="18.6" height="14.4" rx="1.6"/><path d="M665.2,151.6 H683.8 M665.2,154.4 H683.8 M665.2,157.5 H683.8 M668,162.3 H670.4 M672.6,162.3 H677.4" /></svg>
<svg style="position:absolute;left:772px;top:146px" width="22" height="23" viewBox="772 146 22 23" fill="none" stroke="#7c7e90" stroke-width="0.95" stroke-linecap="round" stroke-linejoin="round"><path d="M777.4,155.6 V152.6 C777.4,150 779.8,148.4 783,148.4 C786.2,148.4 788.6,150 788.6,152.6 V155.6"/><rect x="775.4" y="155.8" width="14.8" height="10.6" rx="0.8"/><rect x="782.2" y="158.4" width="1.6" height="3.6" rx="0.8" stroke-width="0.8"/></svg>
<svg style="position:absolute;left:870px;top:150px" width="21" height="17" viewBox="870 150 21 17" fill="none" stroke="#7c7e90" stroke-width="1" stroke-linecap="round" stroke-linejoin="round"><rect x="872.8" y="152.6" width="15" height="11.8" rx="1"/><path d="M872.8,157.3 H887.8 M876.5,152.6 V164.4 M879.8,152.6 V164.4 M884.5,152.6 V164.4 M875.6,155.5 H877.4 M878.9,155.5 H880.7 M883.6,155.5 H885.4 M875.6,161.4 H877.4 M878.9,161.4 H880.7 M883.6,161.4 H885.4" stroke-width="0.9"/></svg>
<svg style="position:absolute;left:1003px;top:149px" width="20" height="19" viewBox="1003 149 20 19" fill="none" stroke="#7c7e90" stroke-width="0.9" stroke-linecap="round" stroke-linejoin="round"><path d="M1007.8,155 L1011.4,151.6 L1013.8,154 L1010.2,157.4 Z M1013.4,154.4 L1016.4,152.2 L1018.8,154.6 L1014.6,158.6 M1015.8,157.4 L1019.4,160 L1016.4,163 L1013.6,160.8 M1006.2,158.4 Q1009,156.6 1011.8,158.6 Q1013.8,160.6 1013.6,163.4 L1012,165.2 L1008.2,161.4 M1006.4,163.2 L1007.6,162 L1008.8,163.2 L1007.6,164.4 Z"/></svg>
<svg style="position:absolute;left:1160px;top:146px" width="24" height="23" viewBox="1160 146 24 23" fill="none" stroke="#7c7e90" stroke-width="1" stroke-linecap="round" stroke-linejoin="round"><rect x="1163.4" y="148.5" width="18" height="17.8"/><path d="M1170.2,153.5 H1177.8 M1170.2,158.4 H1177.8 M1170.2,163.3 H1177.8"/><path d="M1166.6,154 L1167.6,152.6 L1168.6,154 Z M1166.6,162.6 L1167.6,164 L1168.6,162.6 Z" fill="#7c7e90" stroke-width="0.6"/><circle cx="1167.6" cy="158.3" r="0.9" fill="#7c7e90" stroke="none"/></svg>
<svg style="position:absolute;left:1250px;top:147px" width="25" height="21" viewBox="1250 147 25 21" fill="none" stroke="#7c7e90" stroke-width="0.9" stroke-linecap="round" stroke-linejoin="round"><path d="M1253.5,153.4 H1271.6 V165.4 H1253.5 Z M1255.6,153.4 V165.4 M1269.5,153.4 V165.4 M1255,152.4 H1258.2 M1267.2,152.4 H1270.4 M1259.4,153.4 V150.4 H1265.4 V153.4"/></svg>
<svg style="position:absolute;left:1388px;top:150px" width="17" height="17" viewBox="1388 150 17 17" fill="none" stroke="#7c7e90" stroke-width="0.95" stroke-linecap="round" stroke-linejoin="round"><path d="M1391.8,152.8 H1401 Q1402.3,152.8 1402.3,154.1 V160.3 L1398.3,164.3 H1391.8 Q1390.5,164.3 1390.5,163 V154.1 Q1390.5,152.8 1391.8,152.8 Z M1402.3,160.3 H1399.5 Q1398.3,160.3 1398.3,161.5 V164.3"/></svg>
<svg style="position:absolute;left:1464px;top:150px" width="22" height="18" viewBox="1464 150 22 18" fill="none" stroke="#7c7e90" stroke-width="0.95" stroke-linecap="round" stroke-linejoin="round"><g transform="translate(0,0)"><path d="M1466.8,161.2 L1467.8,159.4 Q1467,158 1467,156.4 Q1467,152.4 1472.1,152.4 Q1477.2,152.4 1477.2,156.5 Q1477.2,160.6 1472.2,160.6 H1470.2 Z"/><path d="M1478.6,155.2 Q1483.4,155.8 1483.4,160 Q1483.4,161.8 1482.6,163 L1483,165.2 L1480.6,164.6 Q1476,164.8 1473.6,162.2"/></g></svg>
<svg style="position:absolute;left:264.79999999999995px;top:207.8px" width="22.0" height="18.0" viewBox="264.79999999999995 207.8 22.0 18.0" fill="none" stroke="#7c7e90" stroke-width="0.95" stroke-linecap="round" stroke-linejoin="round"><g transform="translate(-1199.2,57.80000000000001)"><path d="M1466.8,161.2 L1467.8,159.4 Q1467,158 1467,156.4 Q1467,152.4 1472.1,152.4 Q1477.2,152.4 1477.2,156.5 Q1477.2,160.6 1472.2,160.6 H1470.2 Z"/><path d="M1478.6,155.2 Q1483.4,155.8 1483.4,160 Q1483.4,161.8 1482.6,163 L1483,165.2 L1480.6,164.6 Q1476,164.8 1473.6,162.2"/></g></svg>
<svg style="position:absolute;left:1542px;top:149px" width="17" height="19" viewBox="1542 149 17 19" fill="none" stroke="#7c7e90" stroke-width="0.95" stroke-linecap="round" stroke-linejoin="round"><path d="M1546.6,152.3 H1552.3 L1555.6,155.6 V164.3 Q1555.6,165.5 1554.4,165.5 H1546.6 Q1545.5,165.5 1545.5,164.3 V153.5 Q1545.5,152.3 1546.6,152.3 Z M1551.3,152.5 V156.4 H1555.4"/><circle cx="1550.3" cy="160.4" r="1.9"/><path d="M1551.7,161.9 L1553.2,163.5"/></svg>
<svg style="position:absolute;left:1691px;top:149px" width="19" height="19" viewBox="1691 149 19 19" fill="none" stroke="#7c7e90" stroke-width="1.05" stroke-linecap="round" stroke-linejoin="round"><path d="M1695.6,155.2 A6.8,6.8 0 1 1 1694.6,159.8 M1694.2,152.2 L1695.4,155.6 L1698.8,155" /><path d="M1701.2,155.2 V159.4 L1703.6,161.8" stroke-width="1.2"/></svg>
<div style="position:absolute;left:714px;top:259px;width:1px;height:145px;background:#eceef3"></div>
<div style="position:absolute;left:1192px;top:259px;width:1px;height:145px;background:#eceef3"></div>
<div id="t54" class="t" style="left:262.95px;top:281.93px;font-size:14.20px;font-weight:500;color:#3d404c;letter-spacing:0.772px;margin-left:0.20px;-webkit-text-stroke:0.35px #3d404c">Next bill date</div>
<div id="t55" class="t" style="left:263.10px;top:302.14px;font-size:11.60px;font-weight:400;color:#3d404c;letter-spacing:0.345px;margin-left:0.20px"><span style="color:#63666f;font-weight:300;-webkit-text-stroke:0">Last bill date:</span> <span style="font-weight:500">1st Jul 2025</span></div>
<div id="t56" class="t" style="left:565.24px;top:289.60px;font-size:16.00px;font-weight:700;color:#17b5d2;letter-spacing:-0.070px;margin-left:0.80px">5th Jul 2025</div>
<svg style="position:absolute;left:668px;top:292px;" width="15" height="15" viewBox="0 0 15 15" fill="none"><g stroke="#4a8af4" stroke-width="1.2" fill="none"><path d="M7,2.5 H2.5 C1.5,2.5 1,3 1,4 V12.5 C1,13.5 1.5,14 2.5,14 H11 C12,14 12.5,13.5 12.5,12.5 V8"/><path d="M11.5,1 L14,3.5 L7.5,10 L4.5,10.7 L5.2,7.5 Z"/></g></svg>
<div id="t57" class="t" style="left:740.35px;top:282.43px;font-size:14.20px;font-weight:500;color:#3d404c;letter-spacing:0.567px;margin-left:-0.20px;-webkit-text-stroke:0.35px #3d404c">Regular rent <span style="font-weight:300;font-size:12.2px;-webkit-text-stroke:0;color:#63666f">(inc. tax)</span></div>
<div id="t58" class="t" style="left:740.50px;top:302.84px;font-size:11.60px;font-weight:400;color:#63666f;letter-spacing:0.629px;margin-left:0.80px"><span style="font-weight:300;color:#63666f;-webkit-text-stroke:0">incl bill plan discount of</span> <span style="color:#1e8fb8;font-weight:500;-webkit-text-stroke:0.3px currentColor">$0.00</span></div>
<div style="position:absolute;left:741px;top:331px;width:426px;height:1px;background-image:linear-gradient(90deg,#e3e5ea 50%,transparent 50%);background-size:5px 1px"></div>
<div id="t59" class="t" style="right:707.74px;top:290.30px;font-size:16.00px;font-weight:700;color:#1e8fb8;letter-spacing:0.500px;margin-right:0.30px">$36.00</div>
<div id="t60" class="t" style="left:740.35px;top:346.43px;font-size:14.20px;font-weight:500;color:#3d404c;letter-spacing:0.625px;margin-left:0.80px;-webkit-text-stroke:0.35px #3d404c">Total regular bill <span style="font-weight:300;font-size:12.2px;-webkit-text-stroke:0;color:#63666f">(inc. tax)</span></div>
<div id="t61" class="t" style="left:740.50px;top:365.74px;font-size:11.60px;font-weight:400;color:#63666f;letter-spacing:0.659px;margin-left:0.80px"><span style="font-weight:300;color:#63666f;-webkit-text-stroke:0">incl recurring charges of</span> <span style="color:#1e8fb8;font-weight:500;-webkit-text-stroke:0.3px currentColor">$0.00</span></div>
<div id="t62" class="t" style="right:707.74px;top:354.30px;font-size:16.00px;font-weight:700;color:#1e8fb8;letter-spacing:0.500px;margin-right:0.30px">$36.00</div>
<div id="t63" class="t" style="left:1218.43px;top:283.72px;font-size:12.80px;font-weight:600;color:#3d404c;letter-spacing:0.593px;margin-left:-0.20px"><span style="font-weight:600">Bill</span> <span style="font-weight:300;font-size:11.6px;color:#63666f">every 3 months on the 5th</span></div>
<div id="t64" class="t" style="left:1218.50px;top:303.34px;font-size:11.60px;font-weight:400;color:#63666f;letter-spacing:0.644px;margin-left:0.80px"><span style="font-weight:300;color:#63666f;-webkit-text-stroke:0">from</span> <span style="color:#1e8fb8;font-weight:500;-webkit-text-stroke:0.3px currentColor">5th Jul 2025</span> <span style="font-weight:300;color:#63666f;-webkit-text-stroke:0">to</span> <span style="color:#1e8fb8;font-weight:500;-webkit-text-stroke:0.3px currentColor">4th Oct 2025</span></div>
<div id="t65" class="t" style="right:24.24px;top:290.30px;font-size:16.00px;font-weight:700;color:#1e8fb8;letter-spacing:0.203px;margin-right:0.80px">Quarterly</div>
<div id="t66" class="t" style="left:262.60px;top:430.54px;font-size:11.60px;font-weight:400;color:#63666f;letter-spacing:0.672px;margin-left:0.70px"><span style="font-weight:300">Converted from lead</span> <span style="color:#7266e0;font-weight:300">0000500841</span></div>
<div id="t67" class="t" style="left:262.60px;top:450.54px;font-size:11.60px;font-weight:400;color:#63666f;letter-spacing:0.735px;margin-left:0.70px"><span style="font-weight:300">Converted from reservation</span> <span style="color:#7266e0;font-weight:300">00000688</span></div>
<div style="position:absolute;left:238px;top:550px;width:1637px;height:1px;background:#eef0f4"></div>
<svg style="position:absolute;left:262px;top:518px;" width="20" height="16" viewBox="0 0 20 16" fill="none"><path d="M1,6 L10,1 L19,6 V15 H1 Z" fill="#2499c4"/><path d="M4,7.5 H16 M4,10 H16 M4,12.5 H16" stroke="#fff" stroke-width="1.2"/></svg>
<div id="t68" class="t" style="left:286.18px;top:518.94px;font-size:13.60px;font-weight:400;color:#2095c0;letter-spacing:0.150px;margin-left:0.00px">Units</div>
<div style="position:absolute;left:263px;top:548.5px;width:55px;height:3.0px;background:#1a8db5"></div>
<div style="position:absolute;left:1708px;top:508px;width:142px;height:35px;background:#5865dc;border-radius:3px;box-shadow:0 3px 8px rgba(88,101,220,0.18)"></div>
<svg style="position:absolute;left:1730px;top:517px;" width="18" height="16" viewBox="0 0 18 16" fill="none"><g stroke="#fff" stroke-width="1.4" fill="none"><path d="M9,1 V11 M5,7 L9,11 L13,7 M1.5,9 V14.5 H16.5 V9"/></g></svg>
<div id="t69" class="t" style="left:1752.42px;top:518.15px;font-size:13.00px;font-weight:500;color:#ffffff;letter-spacing:0.215px;margin-left:-0.20px;-webkit-text-stroke:0.35px #ffffff">Move-in unit</div>
<div style="position:absolute;left:263px;top:579px;width:333px;height:31px;border:1px solid #bdbdc0;border-radius:3px"></div>
<svg style="position:absolute;left:274px;top:586px;" width="16" height="16" viewBox="0 0 16 16" fill="none"><g stroke="#a09bc6" stroke-width="1" fill="none"><circle cx="6.5" cy="6.5" r="5.3"/><path d="M10.5,10.5 L14.5,14.5"/></g></svg>
<div id="t70" class="t" style="left:296.26px;top:589.06px;font-size:12.40px;font-weight:400;color:#8e8e8e;letter-spacing:-0.250px;margin-left:0.00px">Search...</div>
<div style="position:absolute;left:263px;top:635px;width:117px;height:78px;background:#f3f3f7"></div>
<div style="position:absolute;left:380px;top:635px;width:1319px;height:79px;background:#f3f3f7"></div>
<div style="position:absolute;left:1699px;top:635px;width:151px;height:77.5px;background:#f3f3f7"></div>
<div id="t71" class="t" style="left:270.76px;top:667.16px;font-size:12.40px;font-weight:600;color:#4a4b55;letter-spacing:-0.098px;margin-left:0.50px">Unit</div>
<div id="t72" class="t" style="left:469.16px;top:668.06px;font-size:12.40px;font-weight:600;color:#4a4b55;letter-spacing:0.169px;margin-left:1.10px">Type</div>
<div id="t73" class="t" style="left:585.06px;top:668.06px;font-size:12.40px;font-weight:600;color:#4a4b55;letter-spacing:-0.296px;margin-left:0.20px">Size</div>
<div id="t74" class="t" style="left:713.26px;top:668.06px;font-size:12.40px;font-weight:600;color:#4a4b55;letter-spacing:0.476px;margin-left:0.00px">Move-in date</div>
<div id="t75" class="t" style="right:909.26px;top:659.46px;font-size:12.40px;font-weight:600;color:#4a4b55;letter-spacing:0.069px;margin-right:1.00px">Monthly rack</div>
<div id="t76" class="t" style="right:909.26px;top:676.06px;font-size:12.40px;font-weight:600;color:#4a4b55;letter-spacing:0.863px;margin-right:-0.00px">rate</div>
<div id="t77" class="t" style="left:1032.06px;top:668.06px;font-size:12.40px;font-weight:600;color:#4a4b55;letter-spacing:-0.097px;margin-left:0.20px">Unit discount</div>
<div id="t78" class="t" style="right:623.86px;top:659.46px;font-size:12.40px;font-weight:600;color:#4a4b55;letter-spacing:-0.044px;margin-right:0.40px">Billing plan</div>
<div id="t79" class="t" style="right:623.86px;top:676.06px;font-size:12.40px;font-weight:600;color:#4a4b55;letter-spacing:-0.114px;margin-right:1.40px">discount</div>
<div id="t80" class="t" style="right:483.86px;top:657.06px;font-size:12.40px;font-weight:600;color:#4a4b55;letter-spacing:0.120px;margin-right:0.40px">Monthly reg</div>
<div id="t81" class="t" style="right:484.56px;top:673.76px;font-size:12.40px;font-weight:600;color:#4a4b55;letter-spacing:0.321px;margin-right:0.70px">rent <span style="font-size:9.8px;font-weight:500">(inc. tax)</span></div>
<div id="t82" class="t" style="left:1447.46px;top:667.96px;font-size:12.40px;font-weight:600;color:#4a4b55;letter-spacing:0.118px;margin-left:-0.20px">New rent</div>
<div id="t83" class="t" style="left:1544.66px;top:667.96px;font-size:12.40px;font-weight:600;color:#4a4b55;letter-spacing:0.052px;margin-left:0.60px">Incr. from</div>
<div style="position:absolute;left:271px;top:723px;width:99px;height:31px;border:1.4px solid #5b5fe0;border-radius:3px"></div>
<svg style="position:absolute;left:280.8px;top:731.6px;" width="20" height="16" viewBox="0 0 20 16" fill="none"><g stroke="#5b5fe0" stroke-width="1.3" fill="none" stroke-linejoin="round"><path d="M1,15.2 V5.4 Q1,4.5 1.9,4.1 L9.4,0.9 Q9.9,0.7 10.4,0.9 L17.9,4.1 Q18.8,4.5 18.8,5.4 V15.2"/><path d="M4.3,15.2 V7.4 Q4.3,6.2 5.5,6.2 H14.3 Q15.5,6.2 15.5,7.4 V15.2"/></g><g fill="#5b5fe0"><rect x="6.3" y="8.6" width="3.6" height="2.1"/><rect x="6.3" y="11.6" width="3.6" height="3.3"/><rect x="10.9" y="11.6" width="3.1" height="3.3"/></g></svg>
<div id="t84" class="t" style="left:305.94px;top:732.19px;font-size:12.60px;font-weight:400;color:#5b5fd6;transform:scaleX(0.7738);transform-origin:left;margin-left:0.40px">SSA117</div>
<svg style="position:absolute;left:466px;top:731px" width="17" height="15" viewBox="466 731 17 15" fill="none" stroke="#35363f" stroke-width="1.15" stroke-linecap="round" stroke-linejoin="round"><path d="M469.6,735.4 L471,734.1 V742.5 M473.3,735.4 L474.7,734.1 V742.5 M477,735.4 L478.4,734.1 V742.5" stroke-linecap="butt" stroke-linejoin="miter"/></svg>
<svg style="position:absolute;left:582px;top:731px" width="26" height="15" viewBox="582 731 26 15" fill="none" stroke="#35363f" stroke-width="1.15" stroke-linecap="round" stroke-linejoin="round"><path d="M585.6,735.4 L587,734.1 V742.5 M602.4,735.4 L603.8,734.1 V742.5" stroke-linecap="butt" stroke-linejoin="miter"/></svg>
<div id="t85" class="t" style="left:590.89px;top:732.47px;font-size:11.80px;font-weight:400;color:#35363f;transform:scaleX(1.0822);transform-origin:left;letter-spacing:-3.900px;margin-left:0.40px">x</div>
<div id="t86" class="t" style="left:713.29px;top:732.57px;font-size:11.80px;font-weight:400;color:#35363f;letter-spacing:0.467px;margin-left:0.60px">28th May 2025</div>
<div id="t87" class="t" style="right:909.29px;top:732.57px;font-size:11.80px;font-weight:400;color:#35363f;letter-spacing:-0.380px;margin-right:1.00px">$12.00</div>
<div id="t88" class="t" style="right:483.88px;top:732.30px;font-size:12.00px;font-weight:500;color:#1f2027;letter-spacing:-0.120px;margin-right:0.60px;-webkit-text-stroke:0.35px #1f2027">$12.00</div>
<svg style="position:absolute;left:1765px;top:731px;" width="15" height="17" viewBox="0 0 15 17" fill="none"><g stroke="#9b9b9b" stroke-width="1.2" fill="none"><path d="M7.5,15.5 C3,10.5 1.5,8 1.5,6 C1.5,3 4,1 7.5,1 C11,1 13.5,3 13.5,6 C13.5,8 12,10.5 7.5,15.5 Z"/><circle cx="7.5" cy="6" r="1.8"/></g></svg>
<svg style="position:absolute;left:1792px;top:731px;" width="17" height="17" viewBox="0 0 17 17" fill="none"><g stroke="#3fc49b" stroke-width="1.5" fill="none"><path d="M1.5,5 H15 M11.5,1.5 L15,5 L11.5,8.5 M15.5,12 H2 M5.5,8.5 L2,12 L5.5,15.5"/></g></svg>
<svg style="position:absolute;left:1819px;top:731px;" width="18" height="17" viewBox="0 0 18 17" fill="none"><g stroke="#3d8ef0" stroke-width="1.4" fill="none"><path d="M8,2.5 H3 C2,2.5 1.2,3.2 1.2,4.2 V14 C1.2,15 2,15.8 3,15.8 H13 C14,15.8 14.8,15 14.8,14 V9"/><path d="M13.5,1 L16.5,4 L9,11.5 L5.5,12.3 L6.3,8.8 Z"/></g></svg>
<div style="position:absolute;left:238px;top:788.5px;width:1637px;height:1.0px;background:#e8ebf2"></div>
<svg style="position:absolute;left:260px;top:816px" width="24" height="19" viewBox="260 816 24 19" fill="none" stroke="#fff" stroke-width="1.2" stroke-linecap="round" stroke-linejoin="round"><path d="M266.4,823.4 V828.6 Q266.4,830.4 268.2,830.4 H273.6 M271.4,821.5 H276.6 Q278.4,821.5 278.4,823.3 V828.6" stroke="#9a9ab6" stroke-width="1.1"/><path d="M264.2,823.4 L266.4,820.3 L268.6,823.4 Z M276.2,828.6 L278.4,831.7 L280.6,828.6 Z" stroke="#9a9ab6" stroke-width="1" fill="none"/></svg>
<div id="t89" class="t" style="left:291.62px;top:819.19px;font-size:14.60px;font-weight:500;color:#4a4b52;letter-spacing:0.274px;margin-left:0.20px;-webkit-text-stroke:0.35px #4a4b52">Recurring charges</div>
<div style="position:absolute;left:1657px;top:811px;width:193px;height:30.5px;background:#5865dc;border-radius:3px;box-shadow:0 3px 8px rgba(88,101,220,0.18)"></div>
<svg style="position:absolute;left:1679px;top:818px;" width="19" height="16" viewBox="0 0 19 16" fill="none"><g stroke="#fff" stroke-width="1.3" fill="none"><path d="M1,1.5 H3.5 L6,11 H15.5 L17.5,4.5 H5 M10.5,3 V8 M8,5.5 H13"/><circle cx="7" cy="14" r="1.2"/><circle cx="14" cy="14" r="1.2"/></g></svg>
<div id="t90" class="t" style="left:1700.62px;top:818.65px;font-size:13.00px;font-weight:500;color:#ffffff;letter-spacing:0.141px;margin-left:0.90px;-webkit-text-stroke:0.35px #ffffff">Add recurring charge</div>
<div style="position:absolute;left:238px;top:850.5px;width:1637px;height:1.0px;background:#eef0f4"></div>
<div style="position:absolute;left:263px;top:863px;width:1587px;height:57.5px;background:#f3f3f7"></div>
<div id="t91" class="t" style="left:270.76px;top:884.06px;font-size:12.40px;font-weight:600;color:#4a4b55;letter-spacing:0.883px;margin-left:0.20px">Item</div>
<div id="t92" class="t" style="left:347.76px;top:884.06px;font-size:12.40px;font-weight:600;color:#4a4b55;letter-spacing:0.008px;margin-left:0.50px">Description</div>
<div id="t93" class="t" style="right:989.56px;top:877.96px;font-size:12.40px;font-weight:600;color:#4a4b55;letter-spacing:0.420px;margin-right:0.30px">Amount <span style="color:#6b6c76;font-weight:500;-webkit-text-stroke:0.35px #6b6c76">for 3 month(s)</span></div>
<div id="t94" class="t" style="right:989.71px;top:894.97px;font-size:9.80px;font-weight:400;color:#5b5c66;letter-spacing:0.450px;margin-right:-0.30px;-webkit-text-stroke:0.25px #5b5c66">(inc. tax)</div>
<div id="t95" class="t" style="right:684.76px;top:878.46px;font-size:12.40px;font-weight:600;color:#4a4b55;letter-spacing:0.436px;margin-right:-0.10px">New amount <span style="color:#6b6c76;font-weight:500;-webkit-text-stroke:0.35px #6b6c76">for 3 month(s)</span></div>
<div id="t96" class="t" style="right:684.91px;top:895.97px;font-size:9.80px;font-weight:400;color:#5b5c66;letter-spacing:0.475px;margin-right:-0.50px;-webkit-text-stroke:0.25px #5b5c66">(inc. tax)</div>
<div id="t97" class="t" style="left:1412.26px;top:885.26px;font-size:12.40px;font-weight:600;color:#4a4b55;letter-spacing:0.159px;margin-left:0.50px">Increase from</div>
</body></html>
